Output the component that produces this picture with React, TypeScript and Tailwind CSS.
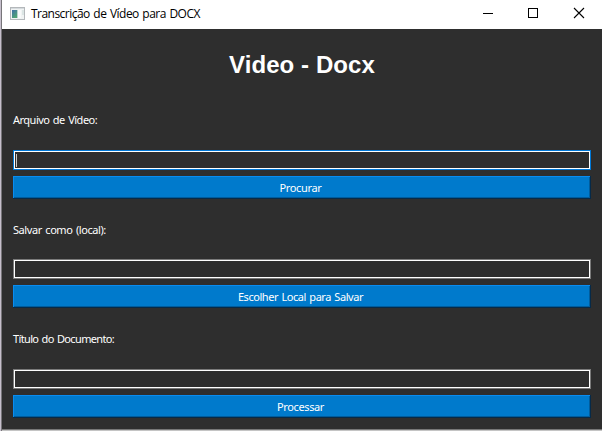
import React from 'react';

function AppIcon() {
  return (
    <svg width="15" height="13" viewBox="0 0 15 13" shapeRendering="crispEdges" className="mb-[3px] shrink-0">
      <defs>
        <linearGradient id="pane" x1="0" y1="0" x2="0.6" y2="1">
          <stop offset="0" stopColor="#3f6fa8" />
          <stop offset="1" stopColor="#4fa573" />
        </linearGradient>
      </defs>
      <rect width="15" height="13" fill="#b4b8bb" />
      <rect x="1" y="1" width="13" height="1" fill="#d5dadd" />
      <rect x="1" y="2" width="13" height="10" fill="#f0f3f3" />
      <rect x="2" y="3" width="5" height="8" fill="url(#pane)" />
      <rect x="7" y="3" width="1" height="8" fill="#b9d3cf" />
      <rect x="8" y="3" width="3" height="8" fill="#f8fafa" />
      <rect x="12" y="3" width="2" height="5" fill="#dbe5e4" />
    </svg>
  );
}

function TitleBar() {
  return (
    <header className="flex h-[29px] shrink-0 items-center bg-white pl-[8px]">
      <AppIcon />
      <h1 className="ml-[6px] grow whitespace-nowrap pb-px font-['Open_Sans',sans-serif] text-[12px] leading-[16px] tracking-[-0.53px] text-black [word-spacing:1px]">
        Transcrição de Vídeo para DOCX
      </h1>
      <svg width="119" height="29" viewBox="0 0 119 29" fill="none" stroke="#000" className="shrink-0">
        <path d="M0 13.5h10M45.5 8.5h9v9h-9z" shapeRendering="crispEdges" />
        <path d="M91 8l10 10M101 8l-10 10" strokeWidth="1.1" />
      </svg>
    </header>
  );
}

interface GroupProps {
  label: string;
  labelClass: string;
  button: string;
  buttonClass: string;
  groupClass: string;
  focused?: boolean;
}

function FieldGroup({ label, labelClass, button, buttonClass, groupClass, focused }: GroupProps) {
  return (
    <section className={groupClass}>
      <p className={`whitespace-nowrap leading-[16px] [word-spacing:1px] ${labelClass}`}>{label}</p>
      <div className={`h-5 border ${focused ? 'border-[#0078d7]' : 'border-[#7a7a7a]'}`}>
        <div className="flex h-full items-center border border-white pl-px">
          {focused && <span className="h-[13px] w-px bg-[#c8c8c8]" />}
        </div>
      </div>
      <button
        className={`mt-[6px] block h-[23px] w-full border-b border-r border-[#062a48] bg-[#007acc] pr-[2px] text-center leading-[23px] shadow-[inset_1px_1px_0_#098cf0,inset_-1px_-1px_0_#005c9c] [word-spacing:1px] ${buttonClass}`}
      >
        {button}
      </button>
    </section>
  );
}

export default function App() {
  return (
    <div className="flex h-[431px] w-[602px] overflow-hidden bg-[#2e2e2e] font-['Noto_Sans',sans-serif] text-[11px] text-white">
      <div className="w-px shrink-0 bg-[#c6bfcc]" />
      <div className="w-px shrink-0 bg-[#777579]" />
      <div className="flex w-[600px] flex-col">
        <TitleBar />
        <main className="grow px-[11px]">
          <h2 className="mt-[22px] h-7 text-center font-['Liberation_Sans',sans-serif] text-[24px] font-bold leading-7 tracking-[0.08px]">
            Video - Docx
          </h2>
          <FieldGroup
            groupClass="mt-[33px]"
            label="Arquivo de Vídeo:"
            labelClass="mb-[22px] tracking-[-0.5px]"
            button="Procurar"
            buttonClass="tracking-[-0.36px]"
            focused
          />
          <FieldGroup
            groupClass="mt-[23px]"
            label="Salvar como (local):"
            labelClass="mb-[21px] tracking-[-0.42px]"
            button="Escolher Local para Salvar"
            buttonClass="tracking-[-0.45px]"
          />
          <FieldGroup
            groupClass="mt-[23px]"
            label="Título do Documento:"
            labelClass="mb-[22px] tracking-[-0.64px]"
            button="Processar"
            buttonClass="tracking-[-0.36px]"
          />
        </main>
        <div className="h-px shrink-0 bg-[#777777]" />
        <div className="h-px shrink-0 bg-[#c4c4c4]" />
      </div>
    </div>
  );
}
